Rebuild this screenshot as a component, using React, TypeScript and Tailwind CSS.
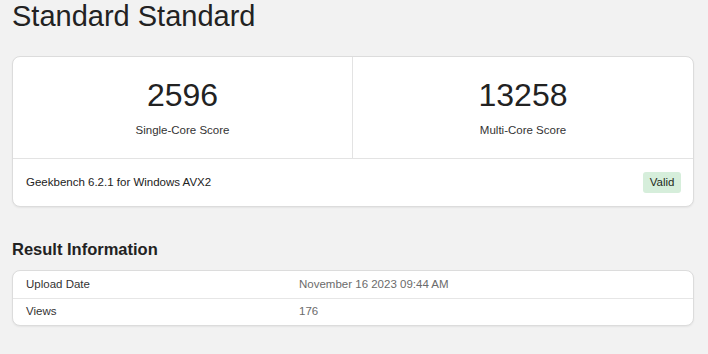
export default function App() {
  const info = [
    { label: "Upload Date", value: "November 16 2023 09:44 AM" },
    { label: "Views", value: "176" },
  ];

  return (
    <div className="w-[708px] h-[354px] overflow-hidden bg-[#f2f2f2] pl-3 pr-[14px] font-['Liberation_Sans',Arial,sans-serif] text-[#222]">
      {/* Title */}
      <h1 className="text-[29px] leading-[32px] font-normal text-[#222]">Standard Standard</h1>

      {/* Score card */}
      <div className="mt-[24px] bg-white border border-[#dcdcdc] rounded-lg shadow-[0_1px_2px_rgba(0,0,0,0.06)]">
        <div className="grid grid-cols-2 border-b border-[#e3e3e3]">
          <div className="flex flex-col items-center pt-[20px] pb-[21px] border-r border-[#e3e3e3]">
            <div className="text-[32px] leading-[37px]">2596</div>
            <div className="mt-[9px] text-[11.5px] leading-[14px] text-[#333]">Single-Core Score</div>
          </div>
          <div className="flex flex-col items-center pt-[20px] pb-[21px]">
            <div className="text-[32px] leading-[37px]">13258</div>
            <div className="mt-[9px] text-[11.5px] leading-[14px] text-[#333]">Multi-Core Score</div>
          </div>
        </div>
        <div className="h-[47px] flex items-center justify-between pl-[13px] pr-[12px]">
          <span className="text-[11.5px] text-[#222]">Geekbench 6.2.1 for Windows AVX2</span>
          <span className="h-[21px] px-[6.5px] flex items-center rounded-[3px] bg-[#d6eedb] text-[11.5px] text-[#1f2b22]">Valid</span>
        </div>
      </div>

      {/* Result Information */}
      <h2 className="mt-[32px] text-[16.5px] leading-[20px] font-bold text-[#222]">Result Information</h2>
      <div className="mt-[11px] bg-white border border-[#dcdcdc] rounded-lg shadow-[0_1px_2px_rgba(0,0,0,0.06)]">
        {info.map((row, i) => (
          <div
            key={row.label}
            className={`h-[27px] flex items-center pl-[13px] text-[11.5px] ${i > 0 ? "border-t border-[#e6e6e6]" : ""}`}
          >
            <span className="w-[273px] text-[#333]">{row.label}</span>
            <span className="text-[#6b6b6b]">{row.value}</span>
          </div>
        ))}
      </div>
    </div>
  );
}
